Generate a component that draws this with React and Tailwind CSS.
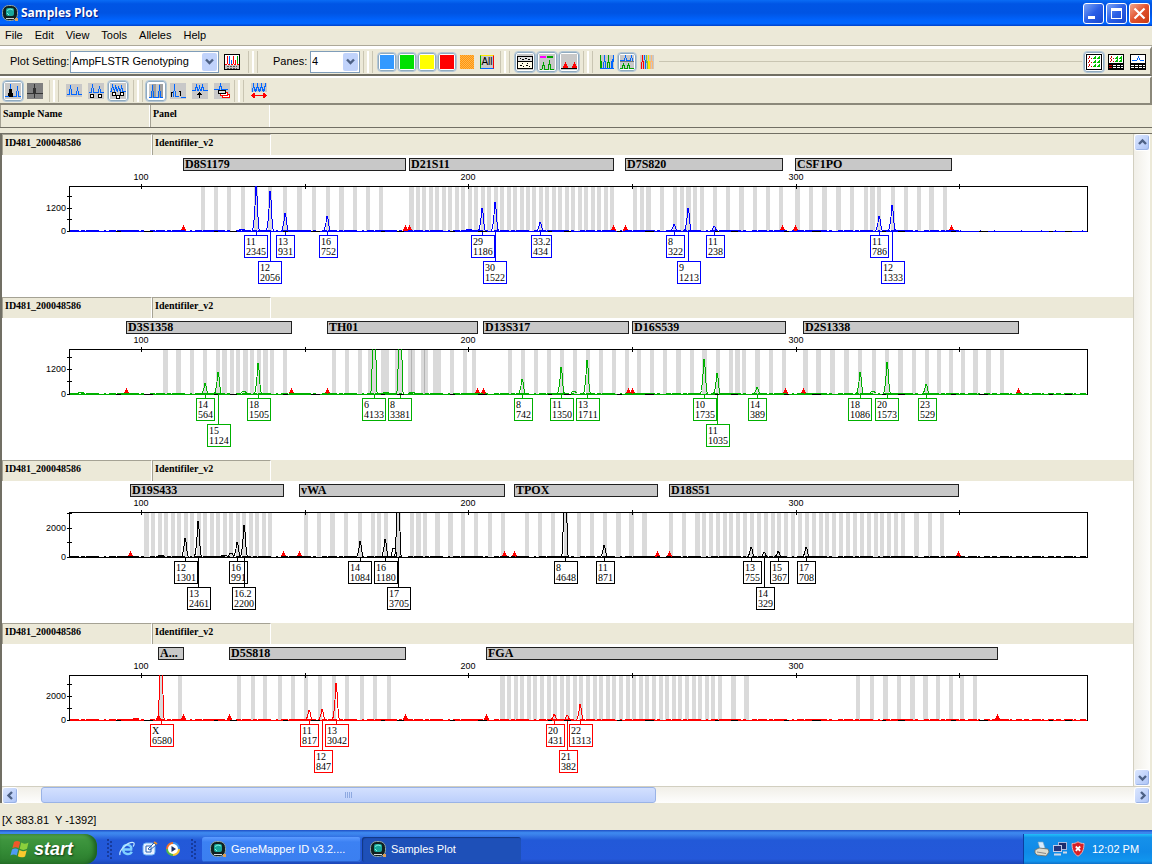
import React, { useId } from "react";

const span = (from, count, pitch) =>
  Array.from({ length: count }, (_, i) => {
    const x = Math.round(from + i * pitch);
    return [x, x + 4];
  });

const PANES = [
  {
    color: "#0000ff",
    yTicks: [[41], [53, "1200"], [64]],
    markers: [["D8S1179", 183, 405], ["D21S11", 409, 613], ["D7S820", 625, 782], ["CSF1PO", 795, 951]],
    bins: [
      [201, 205], [214, 218], [227, 231], [241, 245], [254, 258], [268, 272], [283, 287], [297, 302], [312, 316],
      [326, 330], [339, 344], [353, 357], [366, 370], [379, 383], [409, 414],
      ...span(416, 31, 6.47),
      [633, 637], [640, 644], [646, 651], [660, 664], [673, 677], [680, 684], [686, 691], [693, 697], [700, 704],
      [713, 717], [726, 730], [739, 744], [753, 757], [766, 770], [779, 783], [795, 800], [809, 813], [822, 827],
      [836, 841], [850, 854], [864, 868], [870, 875], [877, 881], [891, 895], [904, 908], [917, 921], [929, 934],
      [943, 947],
    ],
    stutter: [[242, 1], [469, 1]],
    peaks: [
      [256, 46, 244, "11", "2345", 1], [270, 40, 258, "12", "2056", 2], [285, 18, 276, "13", "931", 1],
      [327, 15, 319, "16", "752", 1], [482, 23, 471, "29", "1186", 1], [495, 29, 483, "30", "1522", 2],
      [540, 9, 531, "33.2", "434", 1], [674, 7, 666, "8", "322", 1], [688, 23, 677, "9", "1213", 2],
      [714, 5, 706, "11", "238", 1], [879, 15, 870, "11", "786", 1], [892, 26, 881, "12", "1333", 2],
    ],
  },
  {
    color: "#00b000",
    yTicks: [[39], [51, "1200"], [63]],
    markers: [["D3S1358", 126, 291], ["TH01", 327, 477], ["D13S317", 483, 628], ["D16S539", 632, 785], ["D2S1338", 803, 1018]],
    bins: [
      [163, 168], [176, 181], [190, 194], [203, 207], [216, 220], [222, 227], [230, 234], [236, 240], [243, 248],
      [250, 254], [257, 261], [263, 268], [270, 274], [283, 287], [332, 336], [345, 349], [358, 362], [368, 376],
      [381, 389], [395, 402], [408, 415], [421, 428], [433, 441], [450, 454], [463, 467], [472, 476], [508, 512],
      [521, 525], [534, 538], [547, 551], [560, 564], [573, 577], [586, 590], [599, 603], [612, 616], [625, 629],
      [637, 641], [650, 654], [663, 667], [676, 681], [690, 694], [702, 707], [716, 720], [729, 733], [735, 740],
      [742, 746], [755, 760], [769, 773], [782, 786], [803, 808], [816, 821], [830, 835], [844, 849], [858, 862],
      [872, 876], [885, 889], [898, 903], [912, 916], [925, 929], [937, 941], [949, 953], [961, 965], [973, 978],
      [986, 991], [1000, 1004],
    ],
    overlaps: [411, 424],
    stutter: [[81, 1], [244, 2], [386, 1], [412, 1], [574, 2], [873, 2]],
    peaks: [
      [205, 11, 196, "14", "564", 1], [218, 22, 207, "15", "1124", 2], [258, 31, 247, "18", "1505", 1],
      [374, 120, 362, "6", "4133", 1], [400, 120, 388, "8", "3381", 1], [522, 15, 514, "8", "742", 1],
      [561, 27, 550, "11", "1350", 1], [587, 34, 576, "13", "1711", 1], [704, 35, 693, "10", "1735", 1],
      [717, 21, 706, "11", "1035", 2], [757, 7, 748, "14", "389", 1], [860, 22, 848, "18", "1086", 1],
      [887, 32, 875, "20", "1573", 1], [926, 10, 918, "23", "529", 1],
    ],
  },
  {
    color: "#000000",
    yTicks: [[32], [47, "2000"], [61]],
    markers: [["D19S433", 130, 283], ["vWA", 299, 504], ["TPOX", 514, 657], ["D18S51", 669, 958]],
    bins: [
      [144, 149],
      ...span(151, 19, 6.5),
      [304, 308], [317, 321], [330, 335], [344, 348], [358, 362], [371, 375], [377, 381], [384, 388], [396, 401],
      [410, 414], [416, 421], [423, 427], [435, 440], [448, 453], [461, 465], [474, 478], [488, 492], [501, 505],
      [525, 529], [538, 542], [551, 555], [564, 568], [577, 581], [590, 594], [603, 607], [616, 621], [629, 634],
      [642, 647], [669, 673], [682, 686], [695, 700],
      ...span(702, 30, 6.86),
      [914, 919], [928, 932], [940, 944],
    ],
    stutter: [[161, 1], [224, 1], [231, 3], [394, 8]],
    peaks: [
      [185, 19, 174, "12", "1301", 1], [198, 36, 187, "13", "2461", 2], [237, 15, 229, "16", "991", 1],
      [244, 32, 232, "16.2", "2200", 2], [360, 16, 348, "14", "1084", 1], [385, 18, 374, "16", "1180", 1],
      [398, 90, 387, "17", "3705", 2], [565, 120, 554, "8", "4648", 1], [604, 12, 596, "11", "871", 1],
      [751, 10, 743, "13", "755", 1], [764, 5, 756, "14", "329", 2], [778, 6, 770, "15", "367", 1],
      [806, 10, 797, "17", "708", 1],
    ],
  },
  {
    color: "#ff0000",
    yTicks: [[40], [52, "2000"], [64]],
    markers: [["A...", 158, 183], ["D5S818", 229, 405], ["FGA", 486, 997]],
    bins: [
      [159, 163], [178, 182], [237, 241], [251, 255], [263, 267], [278, 282], [291, 295], [304, 308], [318, 322],
      [332, 336], [345, 349], [360, 364], [373, 377], [387, 391], [500, 505],
      ...span(507, 33, 6.59),
      [731, 736], [744, 749], [856, 860], [870, 874], [883, 888], [897, 901], [910, 915], [923, 928], [936, 940],
      [949, 953], [960, 964], [973, 977],
    ],
    stutter: [[136, 1]],
    peaks: [
      [161, 90, 150, "X", "6580", 1], [309, 10, 300, "11", "817", 1], [322, 11, 314, "12", "847", 2],
      [336, 37, 325, "13", "3042", 1], [554, 6, 546, "20", "431", 1], [567, 5, 559, "21", "382", 2],
      [580, 16, 569, "22", "1313", 1],
    ],
  },
];

const X_TICKS = [[141, "100"], [305], [468, "200"], [632], [796, "300"], [959]];
const BASE = 76;

const peakPath = (x, h) =>
  `M${x - 4} ${BASE} L${x - 2.5} ${BASE - Math.min(h * 0.1, 4)} L${x - 1} ${BASE - h * 0.55} L${x - 0.5} ${BASE - h} h1 L${x + 1.5} ${BASE - h * 0.55} L${x + 2.5} ${BASE - Math.min(h * 0.08, 3)} L${x + 4} ${BASE}`;

function AlleleLabel({ peak, color }) {
  const [x, , left, allele, height, row] = peak;
  const top = row === 1 ? 80 : 106;
  const width = height.length === 4 ? 23 : allele.length === 4 ? 20 : 18;
  return (
    <g>
      <path d={`M${x + 0.5} ${BASE + 1} V${top}`} stroke={color} />
      <rect x={left + 0.5} y={top + 0.5} width={width} height="22" fill="#fff" stroke={color} />
      <text x={left + 2} y={top + 10} fontSize="10">{allele}</text>
      <text x={left + 2} y={top + 20} fontSize="10">{height}</text>
    </g>
  );
}

function Electropherogram({ pane }) {
  const clip = useId();
  const { color, markers, bins, peaks, yTicks, stutter, overlaps = [] } = pane;
  return (
    <svg
      width="1131"
      height="142"
      viewBox="2 0 1131 142"
      className="block shrink-0 font-['Liberation_Serif',serif]"
      fill="none"
      shapeRendering="crispEdges"
      role="img"
      aria-label={markers.map((m) => m[0]).join(", ")}
    >
      <defs>
        <clipPath id={clip}>
          <rect x="69" y="31" width="1019" height="47" />
        </clipPath>
      </defs>
      {markers.map(([name, a, b]) => (
        <g key={name}>
          <rect x={a + 0.5} y="3.5" width={b - a} height="12" fill="#c8c8c8" stroke="#202020" />
          <text x={a + 2} y="13" fontSize="12" fontWeight="bold" fill="#000">{name}</text>
        </g>
      ))}
      {bins.map(([a, b]) => (
        <rect key={a} x={a} y="32" width={b - a} height="44" fill="#dadada" />
      ))}
      {overlaps.map((x) => (
        <rect key={x} x={x} y="32" width="1" height="44" fill="#b4b4b4" />
      ))}
      <rect x="69.5" y="31.5" width="1018" height="45" stroke="#000" />
      {X_TICKS.map(([x, label]) => (
        <g key={x}>
          <path d={`M${x + 0.5} 29 V34`} stroke="#000" />
          {label && (
            <text x={x} y="25" fontSize="9" textAnchor="middle" fill="#000" className="font-['Liberation_Sans',sans-serif]">{label}</text>
          )}
        </g>
      ))}
      {[...yTicks, [BASE, "0"]].map(([y, label]) => (
        <g key={y}>
          <path d={`M67 ${y + 0.5} H72`} stroke="#000" />
          {label && (
            <text x="66" y={y + 3} fontSize="9" textAnchor="end" fill="#000" className="font-['Liberation_Sans',sans-serif]">{label}</text>
          )}
        </g>
      ))}
      <g fill="#ff0000">
        {markers.flatMap(([, a, b]) => [a, b]).map((x) => (
          <path key={x} d={`M${x} 70 h1 v2 h1 v2 h1 v2 h-5 v-2 h1 v-2 h1z`} />
        ))}
      </g>
      <g clipPath={`url(#${clip})`} stroke={color}>
        <path d="M70 76.5 H1087" strokeDasharray="46 5 23 9 61 4 12 7" />
        <path d="M70 75.5 H960" strokeDasharray="9 2 4 1 13 5 2 3 7 1 22 2 3 6 5 1" />
        <path d="M960 75.5 H1087" strokeDasharray={color === "#0000ff" ? "1 19 1 13 1 26" : "5 3 9 1 2 4 6 2"} />
        {stutter.map(([x, h]) => (
          <path key={x} d={`M${x - 3} 75 L${x - 1} ${75.5 - h} h2 L${x + 3} 75`} />
        ))}
        {peaks.map((p) => (
          <path key={p[0]} d={peakPath(p[0], p[1])} />
        ))}
      </g>
      <g fill="#000">
        {peaks.map((p) => (
          <AlleleLabel key={p[0]} peak={p} color={color} />
        ))}
      </g>
    </svg>
  );
}

function Pane({ pane }) {
  return (
    <section className="overflow-hidden bg-white">
      <div className="flex h-[21px] bg-[#ece9d8] font-['Liberation_Serif',serif] text-[10px] leading-[15px] font-bold">
        <div className="w-[150px] border-t border-l border-[#a5a294] border-r border-r-white pl-0.5">ID481_200048586</div>
        <div className="w-[119px] border-t border-l border-[#a5a294] border-r border-r-white pl-0.5">Identifiler_v2</div>
      </div>
      <Electropherogram pane={pane} />
    </section>
  );
}

/* ---------- icons ---------- */

function Icon({ size = 16, children }) {
  return (
    <svg width={size} height={size} viewBox={`0 0 ${size} ${size}`} fill="none" shapeRendering="crispEdges" aria-hidden="true">
      {children}
    </svg>
  );
}

const BLUE = "#0066ff";
const Grey = () => <rect width="16" height="16" fill="#c8c8c8" />;

const PlotSettingIcon = () => (
  <Icon>
    <rect x=".5" y=".5" width="15" height="15" fill="#fff" stroke="#000" />
    <rect x="1" y="11" width="14" height="4" fill="#c8c8c8" />
    <path d="M3.5 2v8M9.5 2v8M11.5 6v4" stroke="#f00" />
    <path d="M5.5 2v8M7.5 6v4" stroke={BLUE} />
    <path d="M13.5 2v8" stroke="#00b000" />
    <path d="M1 10.5h14" stroke="#f00" strokeDasharray="2 1" />
    <path d="M3 12.5h10M3 14.5h10" stroke="#555" strokeDasharray="2 1" />
  </Icon>
);
const HatchIcon = () => (
  <Icon size={14}>
    <rect width="14" height="14" fill="#ffb84a" />
    {Array.from({ length: 14 }, (_, i) => (
      <path key={i} d={`M${i % 2} ${i + 0.5}H14`} stroke="#ff9410" strokeDasharray="1 1" />
    ))}
  </Icon>
);
const AllIcon = () => (
  <span className="flex h-3.5 w-3.5 items-center justify-center border border-t-[#ffe800] border-r-[#f00] border-b-[#0066ff] border-l-[#00b000] bg-[#c8c8c8] text-[10px] leading-3">All</span>
);
const TableLabelIcon = () => (
  <Icon>
    <Grey />
    <path d="M.5 2.5h15v12H.5z" fill="#fffbe8" stroke="#000" />
    <path d="M1 3h14v4H1z" fill="#ddd" />
    <path d="M0 7.5h16" stroke="#000" />
    <path d="M3 4.5h1M5 5.5h2M8 4.5h2M11 5.5h2M5 9.5h1M10 9.5h1M3 11.5h2M6 12.5h1M9 11.5h2M12 12.5h1" stroke="#000" />
  </Icon>
);
const MarkerIcon = () => (
  <Icon>
    <Grey />
    <path d="M1 3h6" stroke="#f0f" strokeWidth="2" />
    <path d="M8 3h6" stroke="#00a000" strokeWidth="2" />
    <path d="M1 15.5h2l1-4 .5-3 .5 3 1 4h3l1-5 .5-4 .5 4 1 5h3" stroke="#00a000" />
  </Icon>
);
const RangeIcon = () => (
  <Icon>
    <Grey />
    <path d="M1 14h1v-2h1v-2h1v-2h1v2h1v2h1v2zM10 14h1v-2h1v-2h1v-2h1v2h1v2h1v2z" fill="#f00" />
    <path d="M0 14.5h16" stroke="#000" />
  </Icon>
);
const OverlayAIcon = () => (
  <Icon size={14}>
    <rect width="14" height="14" fill="#c8c8c8" />
    <path d="M.5 0v14M1.5 6v8M7.5 7v7M8.5 0v8M9.5 7v7" stroke="#00a000" />
    <path d="M3.5 7v7M4.5 0v7M5.5 6v8M11.5 6v8M12.5 4v10M13.5 0v7M0 13.5h14" stroke={BLUE} />
  </Icon>
);
const OverlayBIcon = () => (
  <Icon size={14}>
    <rect width="14" height="14" fill="#c8c8c8" />
    <path d="M0 5.5h4M4.5 3v3M5.5 0v3M6.5 3v3M7 5.5h3M10.500 3v3M11.5 0v3M12.5 3v3" stroke={BLUE} />
    <path d="M0 6.5h14" stroke="#777" />
    <path d="M0 13.500h3M2.500 10v4M3.500 8v3M4.500 10v4M5 13.500h3M7.500 10v4M8.500 8v3M9.500 10v4M10 13.500h4" stroke="#00a000" />
  </Icon>
);
const OverlayCIcon = () => (
  <Icon size={14}>
    <rect width="14" height="14" fill="#c8c8c8" />
    <path d="M1.5 7v7M2.5 0v7M3.5 6v8" stroke="#f00" />
    <path d="M4.5 0v5M5.5 5v9" stroke={BLUE} />
    <path d="M6.5 0v8M7.5 6v8" stroke="#7ac043" />
    <path d="M8.5 0v14M9.5 6v8" stroke="#ffe800" />
    <path d="M11.5 0v7M12.5 6v8M10.5 6v8" stroke="#ffb870" />
  </Icon>
);
const MiniPlots = ({ rows }) => (
  <>
    {rows.map((y) => (
      <g key={y}>
        <path d={`M2 ${y + 2.5}h1M3 ${y + 1.5}h1M3.5 ${y}v1M5 ${y + 2.5}h1`} stroke="#d00000" />
        <path d={`M7 ${y + 3}v-1h1v-1h1v-1h1v3zM11 ${y + 3}v-1h1v-1h1v-1h1v3z`} fill="#00c000" />
      </g>
    ))}
  </>
);
const GridRows = () => (
  <>
    <rect y="9" width="16" height="7" fill="#000" />
    <path d="M1 11.5h14M1 13.5h14" stroke="#fff" strokeDasharray="3 1" />
  </>
);
const PlotsIcon = () => (
  <Icon>
    <rect x=".5" y=".5" width="15" height="15" fill="#fff" stroke="#000" />
    <MiniPlots rows={[2, 6, 10]} />
  </Icon>
);
const PlotsTableIcon = () => (
  <Icon>
    <rect x=".5" y=".5" width="15" height="15" fill="#fff" stroke="#000" />
    <MiniPlots rows={[2, 5]} />
    <GridRows />
    <path d="M1 11.5h3M1 13.5h3" stroke="#c00" />
  </Icon>
);
const PlotTableIcon = () => (
  <Icon>
    <rect x=".5" y=".5" width="15" height="15" fill="#fff" stroke="#000" />
    <path d="M2 6.5h5M7.5 4v2M8.5 2v2M9.5 4v2M10 6.5h4" stroke={BLUE} />
    <GridRows />
  </Icon>
);
const FilledPeakIcon = () => (
  <Icon>
    <Grey />
    <path d="M3 14v-4h1V6h1V2h1v4h1v4h1v4z" fill="#000" />
    <path d="M0 13.5h4M5.5 1v5M8 13.5h4M11.5 8v6M12.5 3v5M13.5 8v6M14 13.5h2" stroke={BLUE} />
  </Icon>
);
const DarkPeakIcon = () => (
  <Icon>
    <rect width="16" height="16" fill="#808080" />
    <path d="M0 10.5h6M6.5 5v6M7.5 1v14M8.5 5v6M9 10.5h7" stroke="#333" />
  </Icon>
);
const TwoPeaksIcon = () => (
  <Icon>
    <rect y="1" width="16" height="13" fill="#c8c8c8" />
    <path d="M1 11.5h2M3.5 6v6M4.5 2v4M5.5 6v6M6 11.5h4M10.5 8v4M11.5 4v4M12.5 8v4M13 11.5h3" stroke={BLUE} />
  </Icon>
);
const PeakLabelsIcon = () => (
  <Icon>
    <Grey />
    <path d="M1 9.5h2M3.5 5v5M4.5 1v4M5.5 5v5M6 9.5h4M10.5 6v4M11.5 3v3M12.5 6v4M13 9.5h3" stroke={BLUE} />
    <path d="M2.5 11.5h3v3h-3zM10.5 11.5h3v3h-3z" fill="#fff" stroke="#000" />
  </Icon>
);
const StackLabelsIcon = () => (
  <Icon>
    <Grey />
    <path d="M0 8.5h2M1.5 5v3M2.5 1v4M3.5 4v3M4.5 6v3M5.5 2v4M6.5 4v4M7.5 6v3M8.5 3v3M9.5 5v3M10.5 6v3M11.5 2v4M12.5 5v4M13 8.5h3" stroke={BLUE} />
    <path d="M2.5 9.5h3v3h-3zM10.5 9.5h3v3h-3zM6.5 12.5h3v3h-3z" fill="#fff" stroke="#000" />
  </Icon>
);
const BinsIcon = () => (
  <Icon size={14}>
    <rect width="14" height="14" fill="#c8c8c8" />
    <path d="M5 0v14M12 0v14" stroke="#a0a0a0" strokeWidth="4" />
    <path d="M0 13.5h2M2.5 7v7M3.5 1v6M4.5 7v7M5 13.5h4M9.5 7v7M10.5 1v6M11.5 7v7M12 13.5h2" stroke={BLUE} />
  </Icon>
);
const CutPeakIcon = () => (
  <Icon>
    <Grey />
    <path d="M3.5 8v6M4.5 1v7M5.5 8v6M6 13.5h3M11 14.5h5" stroke={BLUE} />
    <path d="M1.5 9v5M1 9.5h2M10.5 8v5M9 8.5h2" stroke="#000" />
  </Icon>
);
const ArrowPeakIcon = () => (
  <Icon>
    <Grey />
    <path d="M0 7.5h3M3.5 4v4M4.5 1v4M5.5 4v4M6.5 6v2M7.5 2v4M8.5 6v2M9.5 4v4M10.5 1v4M11.5 4v4M12 7.5h4" stroke={BLUE} />
    <path d="M7 9h1v1h1v1h1v1H8v3H7v-3H5v-1h1v-1h1z" fill="#000" />
  </Icon>
);
const LayersIcon = () => (
  <Icon>
    <Grey />
    <path d="M0 6.5h5M5.5 3v4M6.5 0v4M7.5 3v4M8 6.5h6" stroke={BLUE} />
    <path d="M8.5 11.5h7v3h-7z" fill="#fff" stroke="#f00" />
    <path d="M6.5 9.5h7v3h-7z" fill="#fff" stroke="#f00" />
    <path d="M4.5 7.5h7v3h-7z" fill="#ddd" stroke="#000" />
  </Icon>
);
const WidthIcon = () => (
  <Icon>
    <rect width="16" height="9" fill="#c8c8c8" />
    <path d="M1.5 5v4M2.5 0v5M3.5 4v4M4.500 6v3M5.5 4v4M6.5 0v5M7.5 4v4M8.5 6v3M9.5 4v4M10.5 0v5M11.5 4v4M12.5 6v3M13.5 3v5M14.5 0v4" stroke={BLUE} />
    <path d="M1 12.5h14" stroke="#f00" />
    <path d="M0 12h1v-1h1v-1h2v5H2v-1H1v-1H0zM16 12h-1v-1h-1v-1h-2v5h2v-1h1v-1h1z" fill="#f00" />
  </Icon>
);

const AppIcon = () => (
  <svg width="17" height="17" viewBox="0 0 17 17" aria-hidden="true">
    <rect x=".5" y=".5" width="15" height="15" rx="6" fill="#10201f" stroke="#8fa3a8" />
    <rect x="4" y="3" width="8" height="8" rx="2" fill="#19a79b" />
    <path d="M5 5.5l3-1.5 3 1M5 8l2 2" stroke="#7ff0df" fill="none" />
    <path d="M4 13.5h8" stroke="#cfd6d8" />
    <rect x="13" y="13" width="3" height="3" fill="#d9a05b" />
  </svg>
);

/* ---------- toolbar parts ---------- */

function Tool({ label, on, small, children }) {
  return (
    <button
      type="button"
      title={label}
      aria-label={label}
      aria-pressed={!!on}
      className={`flex shrink-0 items-center justify-center rounded-[4px] ${small ? "h-5 w-5" : "h-[22px] w-[22px]"} ${
        on ? "border border-[#b4c6d4] bg-white shadow-[inset_0_0_0_1px_#8fabc0]" : ""
      }`}
    >
      <span className="shrink-0">{children}</span>
    </button>
  );
}

function Separator({ className }) {
  return (
    <span className={`flex h-[22px] w-2.5 shrink-0 justify-between ${className}`} aria-hidden="true">
      <span className="w-px bg-[#c9c5b2]" />
      <span className="w-0.5 bg-white" />
      <span className="w-px bg-[#c9c5b2]" />
    </span>
  );
}

function Chevron({ d }) {
  return (
    <svg width="9" height="9" viewBox="0 0 9 9" fill="none" stroke="#4d6185" strokeWidth="2.4" aria-hidden="true">
      <path d={d} />
    </svg>
  );
}

function Combo({ id, value, className }) {
  return (
    <span className={`relative flex h-[22px] shrink-0 ${className}`}>
      <select id={id} defaultValue={value} className="h-full w-full appearance-none border border-[#7f9db9] bg-white pl-px text-[11px] outline-none">
        <option>{value}</option>
      </select>
      <span className="pointer-events-none absolute top-0.5 right-0.5 bottom-0.5 flex w-[15px] items-center justify-center rounded-[2px] bg-[#c1d3fb]">
        <Chevron d="M1 2.5L4.5 6L8 2.5" />
      </span>
    </span>
  );
}

function ScrollButton({ label, d }) {
  return (
    <button
      type="button"
      aria-label={label}
      className="flex h-[17px] w-4 shrink-0 items-center justify-center rounded-[3px] border border-white bg-gradient-to-br from-[#dbe6fe] to-[#adc4f7] shadow-[inset_-1px_-1px_0_#9ab3e6]"
    >
      <Chevron d={d} />
    </button>
  );
}

const Swatch = ({ className }) => <span className={`block h-3.5 w-3.5 ${className}`} />;

function TitleBar() {
  const btn = "flex h-[21px] w-[21px] items-center justify-center rounded-[3px] border border-white";
  return (
    <header className="flex h-[26px] items-center justify-between bg-[linear-gradient(#0a6cf5_0%,#0055e5_15%,#0054e3_50%,#0062fb_75%,#0066ff_90%,#0040c8_100%)] pr-0.5 pl-0.5">
      <h1 className="flex items-center gap-0.5 font-['Open_Sans',sans-serif] text-[12px] font-bold text-white [text-shadow:1px_1px_1px_#0a1883]">
        <AppIcon />
        Samples Plot
      </h1>
      <div className="flex gap-0.5">
        <button type="button" aria-label="Minimize" className={`${btn} bg-gradient-to-br from-[#7ea3f5] via-[#2b5fe6] to-[#1747cf]`}>
          <svg width="15" height="15" aria-hidden="true"><rect x="2" y="10" width="7" height="3" fill="#fff" /></svg>
        </button>
        <button type="button" aria-label="Maximize" className={`${btn} bg-gradient-to-br from-[#7ea3f5] via-[#2b5fe6] to-[#1747cf]`}>
          <svg width="15" height="15" fill="none" shapeRendering="crispEdges" aria-hidden="true">
            <rect x="2.5" y="2.5" width="10" height="10" stroke="#fff" />
            <rect x="2" y="2" width="11" height="3" fill="#fff" />
          </svg>
        </button>
        <button type="button" aria-label="Close" className={`${btn} bg-gradient-to-br from-[#f0a58c] via-[#e1512c] to-[#c93a10]`}>
          <svg width="15" height="15" fill="none" aria-hidden="true"><path d="M2.5 2.5l10 10M12.5 2.5l-10 10" stroke="#fff" strokeWidth="2.2" /></svg>
        </button>
      </div>
    </header>
  );
}

function Toolbars() {
  const bar = "flex h-[25px] items-center";
  return (
    <div>
      <div className="border-t border-[#aca899]">
        <div className="border-t-[3px] border-r-2 border-b-2 border-t-white border-r-[#8b887a] border-b-[#716f64]">
          <div className={`${bar} pl-2.5 pr-px`}>
            <label htmlFor="plot-setting" className="w-[60px] shrink-0 whitespace-nowrap">Plot Setting:</label>
            <Combo id="plot-setting" value="AmpFLSTR Genotyping" className="w-[149px]" />
            <span className="ml-0.5"><Tool label="Plot settings"><PlotSettingIcon /></Tool></span>
            <Separator className="ml-[5px]" />
            <label htmlFor="panes" className="ml-[15px] w-[37px] shrink-0">Panes:</label>
            <Combo id="panes" value="4" className="w-[50px]" />
            <Separator className="mr-1 ml-[3px]" />
            <Tool label="Blue dye" on small><Swatch className="bg-[#3399ff]" /></Tool>
            <Tool label="Green dye" on small><Swatch className="bg-[#00e000]" /></Tool>
            <Tool label="Yellow dye" on small><Swatch className="bg-[#ffff00]" /></Tool>
            <Tool label="Red dye" on small><Swatch className="bg-[#ff0000]" /></Tool>
            <Tool label="Orange dye" small><HatchIcon /></Tool>
            <Tool label="All dyes" small><AllIcon /></Tool>
            <Separator className="mr-1 ml-[3px]" />
            <Tool label="Show table labels" on><TableLabelIcon /></Tool>
            <Tool label="Show markers" on><MarkerIcon /></Tool>
            <Tool label="Show marker ranges" on><RangeIcon /></Tool>
            <Separator className="mr-1 ml-[3px]" />
            <Tool label="Combine dyes" small><OverlayAIcon /></Tool>
            <Tool label="Separate dyes" on small><OverlayBIcon /></Tool>
            <Tool label="Overlay all" small><OverlayCIcon /></Tool>
            <span className="mr-px ml-0.5 h-px flex-1 bg-[#c9c5b2]" />
            <Tool label="Plots only" on><PlotsIcon /></Tool>
            <Tool label="Plots and table"><PlotsTableIcon /></Tool>
            <Tool label="Single plot and table"><PlotTableIcon /></Tool>
          </div>
        </div>
      </div>
      <div className="border-t-2 border-r-2 border-b-2 border-t-white border-r-[#8b887a] border-b-[#8b887a]">
        <div className={`${bar} pl-0.5`}>
          <Tool label="Fill peaks" on><FilledPeakIcon /></Tool>
          <Tool label="Dark view"><DarkPeakIcon /></Tool>
          <Separator className="mr-1 ml-[3px]" />
          <Tool label="No labels"><TwoPeaksIcon /></Tool>
          <Tool label="Peak labels"><PeakLabelsIcon /></Tool>
          <Tool label="Stacked labels" on><StackLabelsIcon /></Tool>
          <Separator className="mr-0.5 ml-1" />
          <Tool label="Show bins" on><BinsIcon /></Tool>
          <Tool label="Peak positions"><CutPeakIcon /></Tool>
          <Tool label="Select peak"><ArrowPeakIcon /></Tool>
          <Tool label="Layers"><LayersIcon /></Tool>
          <Separator className="mr-1 ml-px" />
          <Tool label="Full range"><WidthIcon /></Tool>
        </div>
      </div>
    </div>
  );
}

const Dots = () => (
  <svg width="5" height="22" shapeRendering="crispEdges" aria-hidden="true">
    {[1, 5, 9, 13, 17].map((y) => (
      <g key={y} fill="#163a9c">
        <rect x="0" y={y} width="2" height="2" />
        <rect x="3" y={y + 2} width="2" height="2" />
      </g>
    ))}
  </svg>
);

function Taskbar() {
  const task = "flex h-[25px] w-[159px] items-center gap-1 rounded-[3px] pl-2 text-left text-[11px] whitespace-nowrap text-white";
  return (
    <footer className="flex h-[34px] items-stretch bg-[linear-gradient(#1f4fc4_0%,#3e8af0_8%,#3a80ea_14%,#2259d8_30%,#2458da_85%,#1b46b5_100%)]">
      <button
        type="button"
        className="mt-1 flex w-[97px] shrink-0 items-center gap-1 rounded-r-[12px] bg-[linear-gradient(#5aab55_0%,#3f963f_18%,#338a35_60%,#2a7a2c_100%)] pl-2.5 text-[18px] leading-none font-bold text-white italic shadow-[inset_-3px_0_4px_#1c5f20] [text-shadow:1px_1px_2px_#123d13]"
      >
        <svg width="20" height="18" viewBox="0 0 20 18" aria-hidden="true">
          <path d="M4 2c2-1.500 4-1.500 6.200 0L8.600 8.200c-2-1.400-4-1.400-6.200 0z" fill="#f0582a" />
          <path d="M11.200 2.600c2.300 1.400 4.500 1.400 7.300-.2L17 8.800c-2.600 1.500-5 1.400-7.300 0z" fill="#8ccf3c" />
          <path d="M2 9.400c2.200-1.300 4.200-1.300 6.300.1l-1.600 6c-2-1.300-4.100-1.300-6.300 0z" fill="#4f9bf5" />
          <path d="M9.400 10.100c2.300 1.400 4.700 1.400 7.300.1l-1.600 6.200c-2.600 1.300-5 1.200-7.300-.2z" fill="#fbc92d" />
        </svg>
        start
      </button>
      <div className="mt-1 flex items-center gap-[7px] pl-2.5">
        <Dots />
        <a href="#browser" aria-label="Browser">
          <svg width="16" height="16" viewBox="0 0 16 16" fill="none" aria-hidden="true">
            <path d="M13.3 8.5H4c0-6 8-6 8.500-1M4.200 9c.4 5 7 5.200 8.600 1.800" stroke="#7fd0ff" strokeWidth="2.4" />
            <path d="M1 14C-.5 9 9 1 14 1.500c2 .3 1 3 0 4" stroke="#c5ebff" strokeWidth="1.2" />
          </svg>
        </a>
        <a href="#desktop" aria-label="Show desktop">
          <svg width="16" height="16" viewBox="0 0 16 16" fill="none" aria-hidden="true">
            <rect x="1" y="2" width="12" height="12" rx="3" fill="#e8f2ff" stroke="#6fb3f5" />
            <path d="M4 5h5v6H4zM6 8l6-6 2 2-6 5z" fill="#fff" stroke="#2763b5" />
            <path d="M12 1l3 2" stroke="#e5902b" strokeWidth="2" />
          </svg>
        </a>
        <a href="#media" aria-label="Media player">
          <svg width="16" height="16" viewBox="0 0 16 16" aria-hidden="true">
            <path d="M8 1a7 7 0 0 0-7 7h7z" fill="#f0702a" />
            <path d="M8 1a7 7 0 0 1 7 7H8z" fill="#3f92ee" />
            <path d="M1 8a7 7 0 0 0 7 7V8z" fill="#54b948" />
            <path d="M15 8a7 7 0 0 1-7 7V8z" fill="#fbc42d" />
            <circle cx="8" cy="8" r="5" fill="#fff" />
            <path d="M6.500 5L11 8l-4.500 3z" fill="#1d2f66" />
          </svg>
        </a>
        <span className="ml-[3px]"><Dots /></span>
      </div>
      <div className="mt-1 flex flex-1 items-center gap-px pl-1.5">
        <button type="button" className={`${task} bg-[linear-gradient(#5c9bff_0%,#3c81f3_20%,#3b7ff0_100%)] shadow-[inset_-1px_-1px_0_#2a62cf]`}>
          <AppIcon />
          GeneMapper ID v3.2....
        </button>
        <button type="button" aria-current="true" className={`${task} bg-[#1e50b8] shadow-[inset_1px_1px_1px_#123781]`}>
          <AppIcon />
          Samples Plot
        </button>
      </div>
      <div className="mt-1 flex w-[129px] shrink-0 items-center gap-0.5 border-l border-[#0b3fa0] bg-[linear-gradient(#22c0f8_0%,#1591ea_12%,#0f8ae8_60%,#1196ee_90%,#0f70c8_100%)] pl-2.5 text-[11px] whitespace-nowrap text-white">
        <svg width="16" height="16" viewBox="0 0 16 16" aria-hidden="true">
          <path d="M4 1h5l2 6-5 1z" fill="#d6ecff" stroke="#8ab" strokeWidth=".6" />
          <path d="M1 9l4-2 9 1 1 3-3 4-9-1-2-2z" fill="#dcdccf" stroke="#6f6f66" strokeWidth=".8" />
          <path d="M3 11l9 1.500" stroke="#888" />
        </svg>
        <svg width="16" height="16" viewBox="0 0 16 16" aria-hidden="true">
          <rect x="6.500" y="1.500" width="8" height="7" fill="#1c2c6d" stroke="#a9b8dd" />
          <rect x="1.500" y="4.500" width="8" height="6" fill="#24357c" stroke="#c2cbe6" />
          <path d="M2 13.500h7M11 11.500h4" stroke="#d5d9e5" strokeWidth="2" />
        </svg>
        <svg width="16" height="16" viewBox="0 0 16 16" aria-hidden="true">
          <path d="M8 .8c2 1.400 4 1.700 6 1.700 0 6-1.500 10-6 12.700C3.500 12.500 2 8.500 2 2.500c2 0 4-.3 6-1.700z" fill="#d81f26" stroke="#f0b0b0" />
          <path d="M5.800 5.500l4.400 4.400M10.200 5.500L5.800 9.900" stroke="#fff" strokeWidth="1.800" />
        </svg>
        <time className="ml-1">12:02 PM</time>
      </div>
    </footer>
  );
}

export default function App() {
  return (
    <div className="flex min-h-screen flex-col overflow-hidden bg-[#ece9d8] font-['Liberation_Sans',sans-serif] text-[11px] text-black">
      <TitleBar />
      <nav className="flex h-[19px] items-center gap-3 pl-[5px]">
        {["File", "Edit", "View", "Tools", "Alleles", "Help"].map((m) => (
          <button key={m} type="button">{m}</button>
        ))}
      </nav>
      <Toolbars />
      <div className="flex h-[23px] border-b border-[#716f64] font-['Liberation_Serif',serif] text-[10px] leading-[17px] font-bold">
        <div className="w-[150px] border-l border-[#a5a294] border-r border-r-white pl-0.5">Sample Name</div>
        <div className="w-[120px] border-l border-[#a5a294] border-r border-r-white pl-0.5">Panel</div>
      </div>
      <main className="mt-[5px] flex flex-1 flex-col border-t border-l-2 border-[#716f64] pr-0.5">
        <div className="flex flex-1">
          <div className="min-w-0 flex-1 overflow-hidden bg-white">
            {PANES.map((pane) => (
              <Pane key={pane.color} pane={pane} />
            ))}
          </div>
          <div className="flex w-[17px] flex-col justify-between border-l border-[#d2cfc0] bg-gradient-to-r from-[#f1efe8] to-[#fdfdfb]">
            <ScrollButton label="Scroll up" d="M1 6L4.500 2.500L8 6" />
            <ScrollButton label="Scroll down" d="M1 3L4.500 6.500L8 3" />
          </div>
        </div>
        <div className="flex h-[17px] border-t border-[#d2cfc0] bg-gradient-to-b from-[#f1efe8] to-[#fefefd]">
          <ScrollButton label="Scroll left" d="M6 1L2.500 4.500L6 8" />
          <div className="flex-1 pl-[23px]">
            <div className="flex h-4 w-9/16 items-center justify-center gap-px rounded-[3px] border border-[#9ab3e6] bg-[linear-gradient(#d3e0fe,#bccffb)]">
              {[0, 1, 2, 3].map((i) => (
                <span key={i} className="h-1.5 w-px bg-[#8ea9e0]" />
              ))}
            </div>
          </div>
          <ScrollButton label="Scroll right" d="M3 1L6.500 4.500L3 8" />
        </div>
      </main>
      <div className="flex h-[27px] items-center pt-2 pl-0.5 whitespace-pre" role="status">[X 383.81  Y -1392]</div>
      <Taskbar />
    </div>
  );
}
